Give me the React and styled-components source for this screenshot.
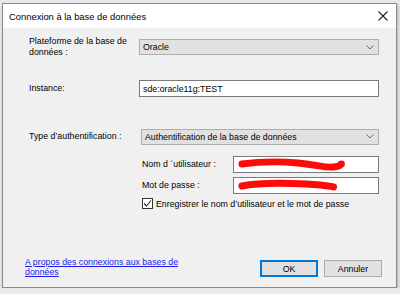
import React from 'react'
import styled, { createGlobalStyle } from 'styled-components'

const Global = createGlobalStyle`
  html, body { margin: 0; padding: 0; }
  body {
    background: #e9e9e9;
    font-family: "Liberation Sans", Arial, sans-serif;
    font-size: 8.8px;
    color: #000;
  }
`

const Window = styled.div`
  width: 393px;
  height: 283px;
  margin: 3px 0 0 2px;
  border: 1px solid #8a8a8a;
  background: #f0f0f0;
  display: flex;
  flex-direction: column;
  box-shadow: 1px 2px 3px rgba(0, 0, 0, 0.25);
`

const TitleBar = styled.div`
  height: 24px;
  background: #fff;
  display: flex;
  align-items: center;
  justify-content: space-between;
  padding: 0 8px 0 6px;
  font-size: 9.4px;
`

const Body = styled.div`
  flex: 1;
  display: flex;
  flex-direction: column;
  padding: 8px 17px 10px 26px;
`

const Row = styled.div`
  display: flex;
  align-items: center;
  margin-top: ${p => p.$gap || 0}px;
  min-height: ${p => p.$h || 17}px;
  white-space: nowrap;
`

const Label = styled.div`
  width: ${p => p.$w || 110}px;
  flex-shrink: 0;
  line-height: 11px;
`

const Select = styled.div`
  flex: 1;
  height: 16px;
  box-sizing: border-box;
  border: 1px solid #adadad;
  background: #e1e1e1;
  display: flex;
  align-items: center;
  justify-content: space-between;
  padding: 0 4px 0 3px;
`

const Input = styled.div`
  flex: 1;
  height: 17px;
  box-sizing: border-box;
  border: 1px solid #7a7a7a;
  background: #fff;
  display: flex;
  align-items: center;
  padding: 0 3px;
  overflow: hidden;
`

const Credentials = styled.div`
  margin-left: 113px;
  display: flex;
  flex-direction: column;
`

const Box = styled.span`
  width: 11px;
  height: 11px;
  box-sizing: border-box;
  border: 1px solid #333;
  background: #fff;
  display: inline-flex;
  align-items: center;
  justify-content: center;
  margin-right: 3px;
`

const Footer = styled.div`
  margin-top: auto;
  display: flex;
  align-items: flex-end;
  justify-content: space-between;
  margin-left: -4px;
  margin-right: -3px;
`

const Link = styled.a`
  color: #1b1bf0;
  text-decoration: underline;
  line-height: 10px;
  cursor: pointer;
`

const Buttons = styled.div`
  display: flex;
  gap: 6px;
`

const Button = styled.button`
  width: 58px;
  height: 17px;
  box-sizing: border-box;
  font: inherit;
  padding: 0;
  background: #e1e1e1;
  border: 1px solid ${p => (p.$primary ? '#0078d7' : '#adadad')};
  box-shadow: ${p => (p.$primary ? 'inset 0 0 0 1px #0078d7' : 'none')};
  color: #000;
`

const Chevron = () => (
  <svg width="8" height="5" viewBox="0 0 8 5">
    <path d="M0.5 0.5 L4 4 L7.5 0.5" fill="none" stroke="#6a6a6a" strokeWidth="1" />
  </svg>
)

const Close = () => (
  <svg width="10" height="10" viewBox="0 0 10 10">
    <path d="M0.5 0.5 L9.5 9.5 M9.5 0.5 L0.5 9.5" stroke="#222" strokeWidth="1.1" />
  </svg>
)

const Scribble = ({ d }) => (
  <svg width="140" height="15" viewBox="0 0 140 15">
    <path d={d} fill="none" stroke="#ff0a0a" strokeWidth="7" strokeLinecap="round" strokeLinejoin="round" />
  </svg>
)

const Check = () => (
  <svg width="9" height="9" viewBox="0 0 9 9">
    <path d="M1 4.5 L3.5 7 L8 1.5" fill="none" stroke="#222" strokeWidth="1.1" />
  </svg>
)

export default function App() {
  return (
    <>
      <Global />
      <Window>
        <TitleBar>
          <span>Connexion à la base de données</span>
          <Close />
        </TitleBar>
        <Body>
          <Row $h={22}>
            <Label>Plateforme de la base de<br />données :</Label>
            <Select>
              <span>Oracle</span>
              <Chevron />
            </Select>
          </Row>
          <Row $gap={22}>
            <Label>Instance:</Label>
            <Input>sde:oracle11g:TEST</Input>
          </Row>
          <Row $gap={31}>
            <Label $w={112}>Type d’authentification :</Label>
            <Select>
              <span>Authentification de la base de données</span>
              <Chevron />
            </Select>
          </Row>
          <Credentials>
            <Row $gap={11}>
              <Label $w={91}>Nom d ´utilisateur :</Label>
              <Input>
                <Scribble d="M5 7 C20 5, 40 4, 62 6 S88 11, 98 10 S104 7, 106 7" />
              </Input>
            </Row>
            <Row $gap={3} $h={18}>
              <Label $w={91}>Mot de passe :</Label>
              <Input>
                <Scribble d="M5 8 C20 5, 50 5, 70 6 S92 8, 98 9" />
              </Input>
            </Row>
            <Row $gap={4} $h={11}>
              <Box><Check /></Box>
              <span>Enregistrer le nom d’utilisateur et le mot de passe</span>
            </Row>
          </Credentials>
          <Footer>
            <Link>A propos des connexions aux bases de<br />données</Link>
            <Buttons>
              <Button $primary>OK</Button>
              <Button>Annuler</Button>
            </Buttons>
          </Footer>
        </Body>
      </Window>
    </>
  )
}
